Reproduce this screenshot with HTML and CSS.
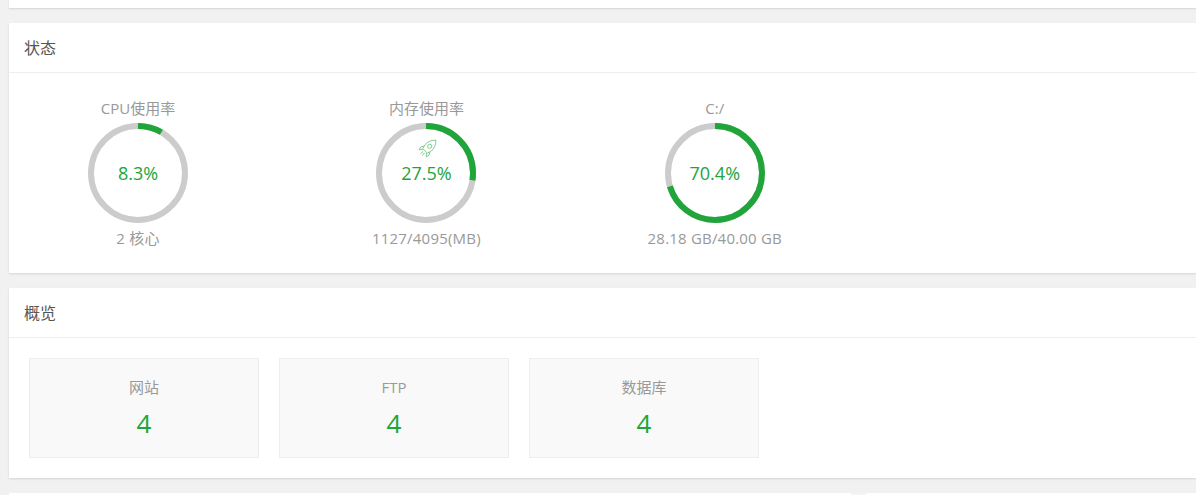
FILE: index.html
```html
<!DOCTYPE html>
<html lang="zh-CN">
<head>
    <meta charset="UTF-8">
    <title>面板首页</title>
    <link rel="stylesheet" href="styles.css">
</head>
<body>
    <div class="card card-top"></div>

    <div class="card">
        <div class="card-title">状态</div>
        <div class="status-list">
            <div class="status-item">
                <div class="status-name">CPU使用率</div>
                <div class="ring">
                    <svg class="ring-svg" viewBox="0 0 100 100">
                        <circle class="ring-bg" cx="50" cy="50" r="47"></circle>
                        <circle class="ring-on" cx="50" cy="50" r="47" pathLength="100" stroke-dasharray="8.3 100"></circle>
                    </svg>
                    <span class="ring-text">8.3%</span>
                </div>
                <div class="status-info">2 核心</div>
            </div>
            <div class="status-item">
                <div class="status-name">内存使用率</div>
                <div class="ring">
                    <svg class="ring-svg" viewBox="0 0 100 100">
                        <circle class="ring-bg" cx="50" cy="50" r="47"></circle>
                        <circle class="ring-on" cx="50" cy="50" r="47" pathLength="100" stroke-dasharray="27.5 100"></circle>
                    </svg>
                    <svg class="rocket" viewBox="0 0 20 20">
                        <path d="M18.8 1.2c-4.800-.1-8.800 1.600-11.300 4.800L5 10l5 5 4-2.500c3.200-2.500 4.900-6.500 4.800-11.300z"></path>
                        <circle cx="12.300" cy="7.700" r="2.200"></circle>
                        <path d="M6.500 7.500l-3.500.8-1.800 3 4.200-.3M12.500 13.500l-.8 3.500-3 1.800.3-4.200"></path>
                        <path d="M5.500 13l-3 2.500M7 14.500l-2.500 3"></path>
                    </svg>
                    <span class="ring-text">27.5%</span>
                </div>
                <div class="status-info">1127/4095(MB)</div>
            </div>
            <div class="status-item">
                <div class="status-name">C:/</div>
                <div class="ring">
                    <svg class="ring-svg" viewBox="0 0 100 100">
                        <circle class="ring-bg" cx="50" cy="50" r="47"></circle>
                        <circle class="ring-on" cx="50" cy="50" r="47" pathLength="100" stroke-dasharray="70.4 100"></circle>
                    </svg>
                    <span class="ring-text">70.4%</span>
                </div>
                <div class="status-info">28.18 GB/40.00 GB</div>
            </div>
        </div>
    </div>

    <div class="card">
        <div class="card-title">概览</div>
        <div class="overview-list">
            <div class="overview-item">
                <div class="overview-name">网站</div>
                <div class="overview-num">4</div>
            </div>
            <div class="overview-item">
                <div class="overview-name">FTP</div>
                <div class="overview-num">4</div>
            </div>
            <div class="overview-item">
                <div class="overview-name">数据库</div>
                <div class="overview-num">4</div>
            </div>
        </div>
    </div>

    <div class="card card-bottom">
        <div class="bottom-tab"></div>
    </div>
</body>
</html>
```

FILE: styles.css
```css
html, body {
    height: 495px;
    overflow: hidden;
}
body {
    margin: 0;
    padding-left: 9px;
    background-color: #f1f1f1;
    font-family: "Open Sans", "Noto Sans CJK SC", sans-serif;
    font-size: 15px;
    color: #999;
}
.card {
    background-color: #fff;
    margin-bottom: 15px;
    box-shadow: 0 1px 2px rgba(0, 0, 0, 0.12);
}
.card-top {
    height: 8px;
}
.card-bottom {
    height: 2px;
    margin-bottom: 0;
    box-shadow: none;
}
.bottom-tab {
    width: 15px;
    height: 2px;
    margin-left: 842px;
    background-color: #f5f5f5;
}
.card-title {
    height: 49px;
    line-height: 51px;
    padding-left: 15px;
    border-bottom: 1px solid #eee;
    font-size: 16px;
    color: #555;
}
.status-list {
    display: flex;
    gap: 30.4px;
    height: 200px;
    padding-top: 24px;
    box-sizing: border-box;
}
.status-item {
    width: 258px;
    text-align: center;
}
.status-name {
    height: 26px;
    line-height: 22px;
}
.status-info {
    height: 24px;
    line-height: 30px;
    letter-spacing: 0.2px;
}
.ring {
    position: relative;
    width: 100px;
    height: 100px;
    margin: 0 auto;
}
.ring-svg {
    display: block;
    width: 100px;
    height: 100px;
    transform: rotate(-90deg);
}
.ring-bg, .ring-on {
    fill: none;
    stroke-width: 6;
}
.ring-bg {
    stroke: #ccc;
}
.ring-on {
    stroke: #20a53a;
}
.ring-text {
    position: absolute;
    left: 0;
    right: 0;
    top: 36px;
    line-height: 28px;
    font-size: 18px;
    color: #20a53a;
}
.rocket {
    position: absolute;
    left: 42px;
    top: 16px;
    width: 19px;
    height: 19px;
    fill: none;
    stroke: #20a53a;
    stroke-width: 1;
    opacity: 0.6;
}
.overview-list {
    display: flex;
    gap: 20px;
    height: 140px;
    padding: 20px;
    box-sizing: border-box;
}
.overview-item {
    width: 230px;
    height: 100px;
    box-sizing: border-box;
    border: 1px solid #eee;
    background-color: #f9f9f9;
    text-align: center;
}
.overview-name {
    margin-top: 18px;
    line-height: 21px;
}
.overview-num {
    margin-top: 7px;
    line-height: 36px;
    font-size: 26px;
    color: #20a53a;
}
```
